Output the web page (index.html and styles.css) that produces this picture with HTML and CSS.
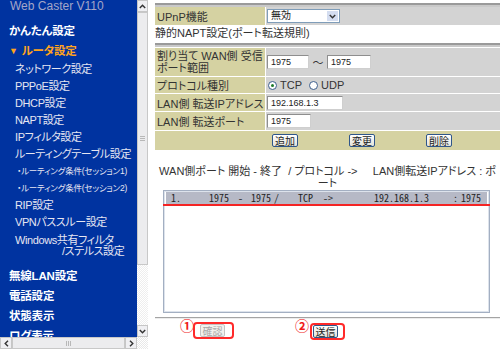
FILE: index.html
```html
<!DOCTYPE html>
<html lang="ja">
<head>
<meta charset="utf-8">
<title>Web Caster V110</title>
<link rel="stylesheet" href="styles.css">
</head>
<body>
<div class="page">
  <aside class="side">
    <div class="side-view">
      <nav class="menu">
        <div class="brand">Web Caster V110</div>
        <div class="main first">かんたん設定</div>
        <div class="main open"><span class="tri">▼</span>ルータ設定</div>
        <div class="sub first-sub">ネットワーク設定</div>
        <div class="sub">PPPoE設定</div>
        <div class="sub">DHCP設定</div>
        <div class="sub">NAPT設定</div>
        <div class="sub">IPフィルタ設定</div>
        <div class="sub">ルーティングテーブル設定</div>
        <div class="sub session">・ルーティング条件(セッション1)</div>
        <div class="sub session">・ルーティング条件(セッション2)</div>
        <div class="sub">RIP設定</div>
        <div class="sub">VPNパススルー設定</div>
        <div class="sub multi"><div>Windows共有フィルタ</div><div class="l2">/ステルス設定</div></div>
        <div class="main lower first-lower">無線LAN設定</div>
        <div class="main lower">電話設定</div>
        <div class="main lower">状態表示</div>
        <div class="main lower">ログ表示</div>
      </nav>
    </div>
    <div class="vbar">
      <div class="sb-btn"><svg width="7" height="5" viewBox="0 0 7 5"><path d="M0.8 4 L3.5 1.2 L6.2 4" fill="none" stroke="#333" stroke-width="1.4"/></svg></div>
      <div class="vthumb"><svg width="5" height="5" viewBox="0 0 5 5"><path d="M0 0.5H5M0 2.5H5M0 4.5H5" stroke="#b8b8b8" stroke-width="1"/></svg></div>
      <div class="vtrack"></div>
      <div class="sb-btn"><svg width="7" height="5" viewBox="0 0 7 5"><path d="M0.8 1 L3.5 3.8 L6.2 1" fill="none" stroke="#333" stroke-width="1.4"/></svg></div>
    </div>
    <div class="hbar">
      <div class="sb-btn h"><svg width="5" height="7" viewBox="0 0 5 7"><path d="M4 0.8 L1.2 3.5 L4 6.2" fill="none" stroke="#333" stroke-width="1.4"/></svg></div>
      <div class="hthumb"><svg width="5" height="5" viewBox="0 0 5 5"><path d="M0.5 0V5M2.5 0V5M4.5 0V5" stroke="#b8b8b8" stroke-width="1"/></svg></div>
      <div class="sb-btn h"><svg width="5" height="7" viewBox="0 0 5 7"><path d="M1 0.8 L3.8 3.5 L1 6.2" fill="none" stroke="#333" stroke-width="1.4"/></svg></div>
    </div>
    <div class="corner"></div>
  </aside>

  <main class="content">
    <div class="bar"></div>
    <div class="form upnp">
      <div class="lab">UPnP機能</div>
      <div class="val">
        <div class="select"><span class="sel-txt">無効</span><span class="sel-arr"><svg width="7" height="5" viewBox="0 0 7 5"><path d="M0.8 1 L3.5 3.8 L6.2 1" fill="none" stroke="#333" stroke-width="1.4"/></svg></span></div>
      </div>
    </div>
    <p class="title">静的NAPT設定(ポート転送規則)</p>
    <div class="bar bar2"></div>
    <div class="form rules">
      <div class="lab two">割り当て WAN側 受信<br>ポート範囲</div>
      <div class="val"><span class="inp w42">1975</span><span class="tilde">〜</span><span class="inp w44">1975</span></div>
      <div class="lab">プロトコル種別</div>
      <div class="val"><span class="radio on"></span><span class="rtxt">TCP</span><span class="radio"></span><span class="rtxt">UDP</span></div>
      <div class="lab">LAN側 転送IPアドレス</div>
      <div class="val"><span class="inp w76">192.168.1.3</span></div>
      <div class="lab">LAN側 転送ポート</div>
      <div class="val"><span class="inp w44">1975</span></div>
      <div class="btn-row">
        <span class="btn">追加</span>
        <span class="btn">変更</span>
        <span class="btn">削除</span>
      </div>
    </div>
    <p class="list-head">WAN側ポート 開始 - 終了  / プロトコル ->     LAN側転送IPアドレス : ポ<br>ート</p>
    <div class="listbox">
      <div class="item"><span class="c1">1.</span><span class="c2">1975</span><span class="c3">-</span><span class="c4">1975</span><span class="c5">/</span><span class="c6">TCP</span><span class="c7">-&gt;</span><span class="c8">192.168.1.3</span><span class="c9">:</span><span>1975</span></div>
      <div class="redline"></div>
    </div>
    <div class="rule"></div>
    <div class="actions">
      <span class="num">①</span>
      <span class="mark m1"><span class="btn off">確認</span></span>
      <span class="num n2">②</span>
      <span class="mark m2"><span class="btn">送信</span></span>
    </div>
  </main>
</div>
</body>
</html>
```

FILE: styles.css
```css
* { box-sizing: border-box; }

html, body {
  margin: 0;
  padding: 0;
  background: #fff;
}

body {
  width: 500px;
  height: 349px;
  overflow: hidden;
  font-family: "Liberation Sans", "Noto Sans CJK JP", sans-serif;
  font-feature-settings: "palt";
  color: #333;
}

.page {
  display: flex;
  height: 349px;
}

/* ---------- sidebar frame ---------- */
.side {
  flex: none;
  width: 148px;
  display: grid;
  grid-template-columns: 137px 11px;
  grid-template-rows: 337px 12px;
}

.side-view {
  background: #0033a0;
  overflow: hidden;
}

.menu {
  display: flex;
  flex-direction: column;
  white-space: nowrap;
}

.brand {
  height: 13px;
  line-height: 13px;
  padding-left: 10px;
  font-size: 12px;
  color: #a4a6c8;
}

.main {
  height: 16px;
  line-height: 16px;
  padding-left: 9px;
  font-size: 11.5px;
  font-weight: bold;
  letter-spacing: -0.2px;
  color: #fff;
}
.main.first { margin-top: 10px; }
.main.open { margin-top: 4px; color: #ffa41c; }
.tri { font-size: 9px; margin-right: 4px; vertical-align: 1px; }

.sub {
  height: 17px;
  line-height: 17px;
  padding-left: 15px;
  font-size: 11px;
  letter-spacing: -0.4px;
  color: #e6e6f2;
}
.sub.first-sub { margin-top: 2px; }
.sub.session { padding-left: 17px; font-size: 8.5px; letter-spacing: -0.2px; }
.sub.multi {
  height: auto;
  line-height: 11px;
  margin-top: 4px;
}
.sub.multi .l2 { padding-left: 47px; }

.main.lower { height: 20px; line-height: 20px; }
.main.first-lower { margin-top: 9px; }

/* ---------- fake scrollbars ---------- */
.vbar {
  display: flex;
  flex-direction: column;
  background: #fff;
}
.sb-btn {
  flex: none;
  height: 12px;
  background: #efeff2;
  border: 1px solid #c6c6c6;
  display: flex;
  align-items: center;
  justify-content: center;
}
.sb-btn.h { height: auto; width: 12px; }
.vthumb {
  flex: none;
  height: 253px;
  background: #ececee;
  border: 1px solid #c8c8c8;
  display: flex;
  align-items: center;
  justify-content: center;
}
.vtrack {
  flex: 1;
  background: repeating-conic-gradient(#eeeeee 0 25%, #ffffff 0 50%) 0 0 / 2px 2px;
}
.hbar {
  display: flex;
}
.hthumb {
  flex: 1;
  background: #ececee;
  border: 1px solid #c8c8c8;
  display: flex;
  align-items: center;
  justify-content: center;
}
.corner {
  background: repeating-conic-gradient(#e8e8e8 0 25%, #ffffff 0 50%) 0 0 / 2px 2px;
}

/* ---------- content ---------- */
.content {
  flex: none;
  width: 345px;
  margin-left: 7px;
  display: flex;
  flex-direction: column;
}

.bar {
  height: 4px;
  margin-top: 3px;
  border-top: 2px solid #9a9a9a;
  background: #c9c9c9;
}
.bar.bar2 { margin-top: 3px; }

.form {
  display: grid;
  grid-template-columns: 110px 1fr;
  gap: 1px;
}
.upnp { grid-template-rows: 18px; }
.rules { grid-template-rows: 28px 16px 17px 18px 19px; margin-top: 1px; }

.lab {
  background: #d5d2a2;
  font-size: 11px;
  color: #333;
  padding-left: 2px;
  display: flex;
  align-items: center;
  white-space: nowrap;
}
.lab.two { line-height: 12px; }

.val {
  background: #d3d3d3;
  padding-left: 1px;
  display: flex;
  align-items: center;
}

.select {
  width: 73px;
  height: 14px;
  border: 1px solid #7f9db9;
  background: #fff;
  display: flex;
}
.sel-txt {
  flex: 1;
  padding-left: 3px;
  font-size: 10px;
  line-height: 12px;
  color: #222;
}
.sel-arr {
  width: 13px;
  background: #d4ddf0;
  border: 1px solid #fff;
  display: flex;
  align-items: center;
  justify-content: center;
}

.title {
  margin: 1px 0 0;
  height: 14px;
  line-height: 14px;
  font-size: 11px;
  color: #333;
  white-space: nowrap;
}

.inp {
  display: inline-block;
  height: 14px;
  border: 1px solid #8e8e8e;
  border-right-color: #cfcfcf;
  border-bottom-color: #cfcfcf;
  background: #fff;
  font-size: 9px;
  line-height: 12px;
  padding-left: 3px;
  color: #222;
}
.w42 { width: 42px; }
.w44 { width: 44px; }
.w76 { width: 76px; }
.tilde {
  width: 18px;
  text-align: center;
  font-size: 11px;
  color: #333;
}

.radio {
  width: 9px;
  height: 9px;
  border: 1px solid #3d5f8d;
  border-radius: 50%;
  background: #fff;
  margin-left: 1px;
}
.radio.on::after {
  content: "";
  display: block;
  width: 3px;
  height: 3px;
  margin: 2px;
  border-radius: 50%;
  background: #1f7a2a;
}
.rtxt {
  font-size: 11px;
  margin: 0 6px 0 3px;
  color: #333;
}

.btn-row {
  grid-column: 1 / -1;
  background: #d5d2a2;
  display: flex;
  align-items: center;
  padding-left: 117px;
  column-gap: 51px;
}
.btn {
  display: inline-flex;
  align-items: center;
  height: 13px;
  padding: 0 2px;
  border: 1px solid #2f568a;
  border-radius: 2px;
  background: linear-gradient(#ffffff, #e2e2da);
  font-size: 10px;
  color: #222;
  white-space: nowrap;
}
.btn.off {
  border-color: #c4c4c4;
  color: #a8a8a8;
  background: #f2f2ee;
}

.list-head {
  margin: 15px 0 0;
  line-height: 12px;
  font-size: 11px;
  text-align: center;
  white-space: pre;
  color: #333;
}

.listbox {
  position: relative;
  margin: 1px 0 0 8px;
  width: 327px;
  height: 123px;
  border: 1px solid #a3afc2;
  box-shadow: inset 1px 1px 0 #dde3ec, inset -1px -1px 0 #dde3ec;
  background: #fff;
  padding: 1px 2px 0;
}
.item {
  height: 12px;
  line-height: 12px;
  background: #b6b9c6;
  padding-left: 5px;
  font-family: "Noto Sans Mono CJK JP", "Liberation Mono", monospace;
  font-size: 10px;
  color: #222;
  white-space: nowrap;
}
.item span { display: inline-block; }
.c1 { width: 38px; }
.c2 { width: 29px; }
.c3 { width: 13px; }
.c4 { width: 23px; }
.c5 { width: 24px; }
.c6 { width: 25px; }
.c7 { width: 51px; }
.c8 { width: 79px; }
.c9 { width: 8px; }

.redline {
  position: absolute;
  left: -1px;
  right: -1px;
  top: 13px;
  height: 2px;
  background: #f42424;
}

.rule {
  margin-top: 4px;
  height: 2px;
  border-top: 1px solid #a4a4a4;
  background: #ececec;
}

.actions {
  display: flex;
  align-items: flex-start;
  padding-left: 25px;
}
.num {
  font-family: "Noto Sans CJK JP", sans-serif;
  font-size: 14px;
  line-height: 13px;
  font-weight: bold;
  color: #f01c1c;
  width: 13px;
}
.num.n2 { margin-left: 61px; }
.mark {
  display: inline-flex;
  border: 2px solid #ff2a2a;
  border-radius: 4px;
}
.m1 { margin-top: 3px; padding: 0 7px 0 5px; }
.m2 { margin-top: 4px; margin-left: 2px; padding: 0 5px 0 1px; }
.m1 .btn, .m2 .btn { width: 25px; justify-content: center; }
```
